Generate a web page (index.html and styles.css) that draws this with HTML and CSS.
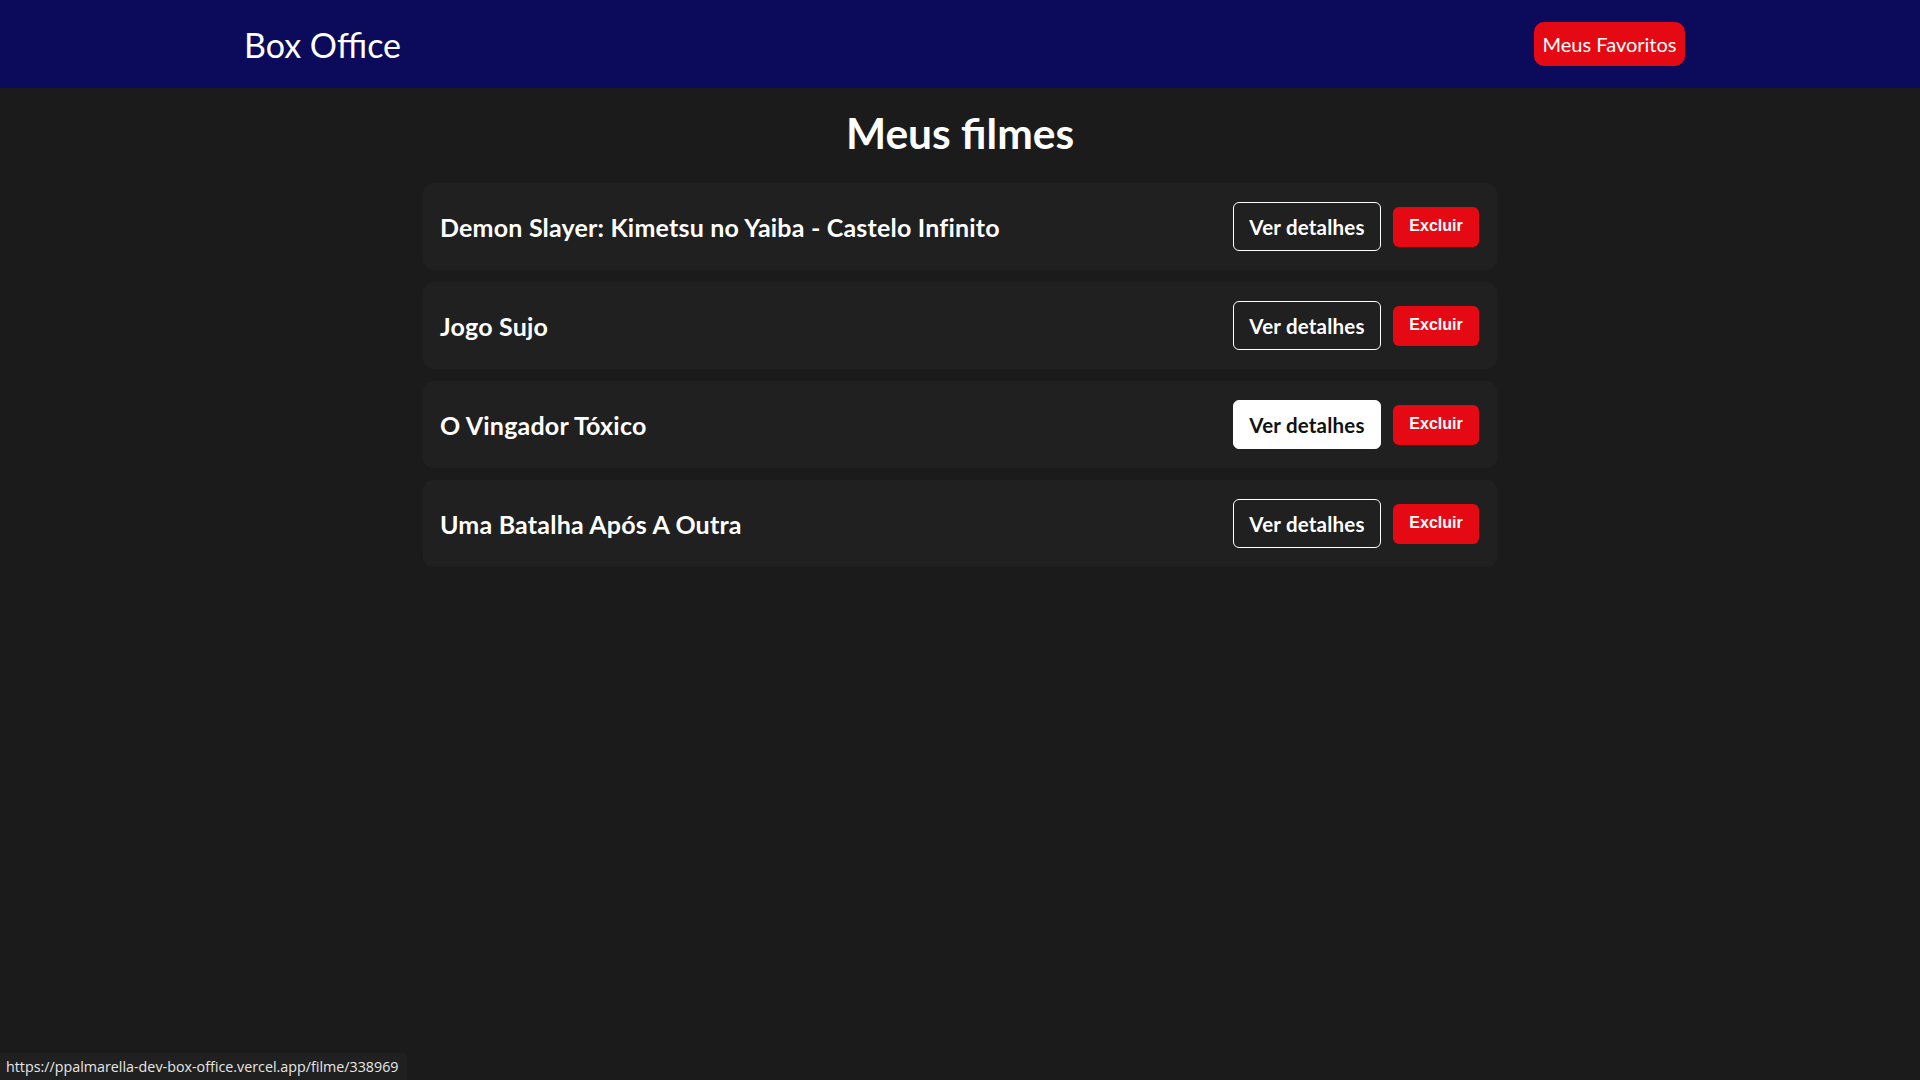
FILE: index.html
```html
<!DOCTYPE html>
<html lang="pt-BR">
<head>
<meta charset="utf-8">
<title>Box Office</title>
<link rel="stylesheet" href="styles.css">
</head>
<body>
<header class="topbar">
  <div class="topbar-inner">
    <a class="brand" href="#">Box Office</a>
    <a class="fav-btn" href="#">Meus Favoritos</a>
  </div>
</header>
<main class="content">
  <h1 class="page-title">Meus filmes</h1>
  <ul class="movie-list">
    <li class="movie-card">
      <span class="movie-name">Demon Slayer: Kimetsu no Yaiba - Castelo Infinito</span>
      <div class="actions">
        <a class="btn-details" href="#">Ver detalhes</a>
        <button class="btn-delete">Excluir</button>
      </div>
    </li>
    <li class="movie-card">
      <span class="movie-name">Jogo Sujo</span>
      <div class="actions">
        <a class="btn-details" href="#">Ver detalhes</a>
        <button class="btn-delete">Excluir</button>
      </div>
    </li>
    <li class="movie-card">
      <span class="movie-name">O Vingador Tóxico</span>
      <div class="actions">
        <a class="btn-details is-hover" href="#">Ver detalhes</a>
        <button class="btn-delete">Excluir</button>
      </div>
    </li>
    <li class="movie-card">
      <span class="movie-name">Uma Batalha Após A Outra</span>
      <div class="actions">
        <a class="btn-details" href="#">Ver detalhes</a>
        <button class="btn-delete">Excluir</button>
      </div>
    </li>
  </ul>
</main>
<div class="status-bar">https://ppalmarella-dev-box-office.vercel.app/filme/338969</div>
</body>
</html>
```
FILE: styles.css
```css
* { box-sizing: border-box; }
html, body { margin: 0; padding: 0; }
body {
  background: #1b1b1b;
  color: #ffffff;
  font-family: "Lato", "Open Sans", sans-serif;
  min-height: 100vh;
}
.topbar {
  background: #0c0a5a;
  height: 88px;
}
.topbar-inner {
  max-width: 1450px;
  height: 100%;
  margin: 0 auto;
  display: flex;
  align-items: center;
  justify-content: space-between;
}
.brand {
  color: #ffffff;
  text-decoration: none;
  font-size: 34px;
  font-weight: 400;
  padding-left: 9px;
}
.fav-btn {
  background: #e50914;
  color: #ffffff;
  text-decoration: none;
  font-size: 20px;
  height: 44px;
  width: 151px;
  white-space: nowrap;
  display: flex;
  align-items: center;
  justify-content: center;
  border-radius: 10px;
}
.content {
  width: 1074px;
  margin: 0 auto;
}
.page-title {
  margin: 0;
  padding-top: 18px;
  height: 95px;
  text-align: center;
  font-size: 42.5px;
  font-weight: 700;
  line-height: 1.25;
}
.movie-list {
  list-style: none;
  margin: 0;
  padding: 0;
  display: flex;
  flex-direction: column;
  gap: 12px;
}
.movie-card {
  background: #202020;
  border-radius: 10px;
  height: 87px;
  padding: 0 18px 0 17px;
  display: flex;
  align-items: center;
  justify-content: space-between;
}
.movie-name {
  font-size: 25px;
  letter-spacing: 0.2px;
  font-weight: 700;
}
.actions {
  display: flex;
  align-items: center;
  gap: 12px;
}
.btn-details {
  color: #ffffff;
  text-decoration: none;
  font-size: 20.5px;
  letter-spacing: 0.2px;
  font-weight: 700;
  width: 148px;
  height: 49px;
  border: 1px solid #ffffff;
  border-radius: 6px;
  display: flex;
  align-items: center;
  justify-content: center;
}
.btn-details.is-hover {
  background: #ffffff;
  color: #111111;
}
.btn-delete {
  background: #e50914;
  color: #ffffff;
  border: none;
  border-radius: 6px;
  font-family: "Liberation Sans", Arial, sans-serif;
  font-size: 16px;
  font-weight: 700;
  width: 86px;
  height: 40px;
  padding: 0 0 1px;
}
.status-bar {
  position: fixed;
  left: 0;
  bottom: 0;
  height: 27px;
  padding: 0 8px 0 6px;
  background: #202020;
  color: #e6e6e6;
  font-family: "Open Sans", sans-serif;
  font-size: 14.3px;
  line-height: 27px;
  border-top-right-radius: 4px;
}
```
